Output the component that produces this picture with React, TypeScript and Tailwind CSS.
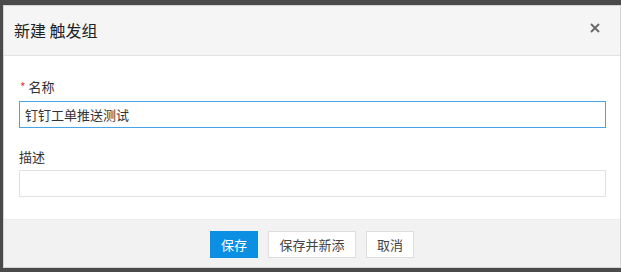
export default function App() {
  return (
    <div
      className="w-[621px] h-[272px] bg-[#4a4a4a] pt-[5px] pl-[3px] overflow-hidden"
      style={{ fontFamily: '"Noto Sans CJK SC", "Noto Sans", sans-serif' }}
    >
      <div className="w-[618px] h-[263px] border border-[#d4d4d4] bg-white flex flex-col text-[#333]">
        <div className="h-[50px] shrink-0 bg-[#f5f5f5] border-b border-[#e3e3e3] flex items-center justify-between pl-[10px] pr-[20px]">
          <span className="text-[16px] leading-none text-[#222] mb-[1px]">新建 触发组</span>
          <svg width="10" height="10" viewBox="0 0 10 10" className="text-[#6b6b6b] mb-[5px]">
            <path d="M1 1 L9 9 M9 1 L1 9" stroke="currentColor" strokeWidth="2" />
          </svg>
        </div>
        <div className="h-[163px] shrink-0 pt-[21px] pl-[15px] pr-[14px]">
          <div className="h-[20px] flex items-center text-[13px] mb-[4px]">
            <span className="text-[#e84040] text-[12px] mr-[3px] ml-[1px]">*</span>
            名称
          </div>
          <div className="h-[27px] bg-[#45a5e8] p-px">
            <div className="h-full bg-white flex items-center px-[5px] text-[13px]">钉钉工单推送测试</div>
          </div>
          <div className="h-[20px] flex items-center text-[13px] mt-[19px] mb-[3px]">描述</div>
          <div className="h-[27px] border border-[#e2e2e2]" />
        </div>
        <div className="flex-1 bg-[#f2f2f2] border-t border-[#ededed] flex justify-center items-start pt-[11px] gap-[10px] text-[13px]">
          <button className="w-[48px] h-[27px] bg-[#0a8fe2] text-white">保存</button>
          <button className="w-[88px] h-[27px] bg-white border border-[#dedede] text-[#444]">保存并新添</button>
          <button className="w-[48px] h-[27px] bg-white border border-[#dedede] text-[#444]">取消</button>
        </div>
      </div>
    </div>
  )
}
